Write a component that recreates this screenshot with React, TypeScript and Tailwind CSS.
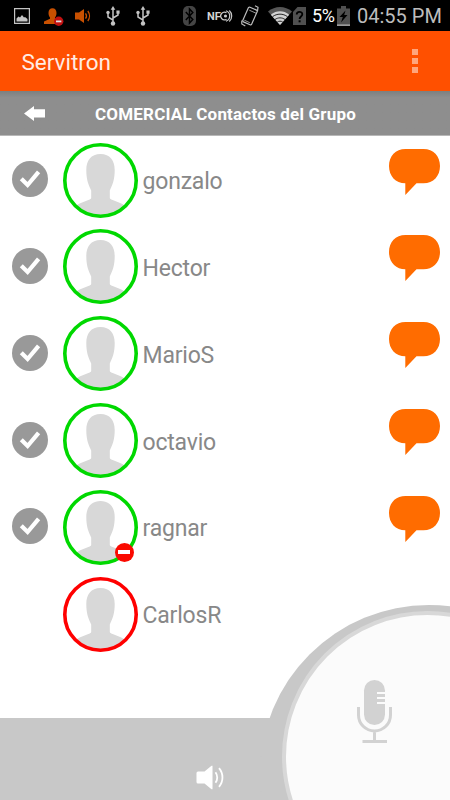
import { clsx } from "clsx";

interface Contact {
  name: string;
  online: boolean;
  busy?: boolean;
}

const contacts: Contact[] = [
  { name: "gonzalo", online: true },
  { name: "Hector", online: true },
  { name: "MarioS", online: true },
  { name: "octavio", online: true },
  { name: "ragnar", online: true, busy: true },
  { name: "CarlosR", online: false },
];

function UsbIcon({ className }: { className?: string }) {
  return (
    <svg className={clsx("h-5 w-[14px] shrink-0", className)} viewBox="0 0 14 20" fill="none" stroke="#c4c4c4" strokeWidth="1.5">
      <path d="M7 3v13M7 14.2 2 11V6.500M7 12l5-3V5.500" />
      <path d="m7 0 2.300 3.800H4.700z" fill="#c4c4c4" stroke="none" />
      <circle cx="7" cy="17.500" r="2.200" fill="#c4c4c4" stroke="none" />
      <circle cx="2" cy="6.500" r="1.700" fill="#c4c4c4" stroke="none" />
      <path d="M10.400 4.500h3.200v3.200h-3.200z" fill="#c4c4c4" stroke="none" />
    </svg>
  );
}

function StatusBar() {
  return (
    <div className="flex h-[31px] shrink-0 items-center bg-black">
      {/* Notifications */}
      <svg className="ml-[14px] h-4 w-4 shrink-0" viewBox="0 0 16 16">
        <path d="M.6.6h14.800v14.800H.6z" fill="none" stroke="#c4c4c4" strokeWidth="1.200" />
        <path d="M2.500 13.500v-3l2-2 1.500 1 2-2.500 2 2.500 1-.5 2.500 2v2.500z" fill="#c4c4c4" />
      </svg>
      <svg className="mt-[2px] ml-[14px] h-[18px] w-[20px] shrink-0" viewBox="0 0 20 18">
        <path d="M4.500 5c0-3 1.500-4.800 4-4.800s4 1.800 4 4.800c0 2.200-.8 3.500-1.500 4.500v1.300l5 2V16H0v-2.500l6-2.700V9.500C5.300 8.500 4.500 7.200 4.500 5z" fill="#c85000" />
        <circle cx="14.700" cy="13.300" r="4.700" fill="#c01010" />
        <path d="M12 12.500h5.400v1.800H12z" fill="#ddd" />
      </svg>
      <svg className="ml-[11px] h-[14px] w-4 shrink-0" viewBox="0 0 16 14">
        <path d="M0 3.500h4L9 0v14l-5-3.500H0z" fill="#c85000" />
        <path d="M10.500 4.300c1.200 1.600 1.200 3.800 0 5.400M12.800 2c2.200 2.900 2.200 7.100 0 10" fill="none" stroke="#c85000" strokeWidth="1.300" />
      </svg>
      <UsbIcon className="ml-[15px]" />
      <UsbIcon className="ml-[16px]" />

      {/* System */}
      <svg className="ml-[33px] h-5 w-[13px] shrink-0" viewBox="0 0 13 20">
        <rect width="13" height="20" rx="5" fill="#454545" />
        <path d="m2.800 6 7 7.500L6.500 17V3l3.300 3.500-7 7.500" fill="none" stroke="#000" strokeWidth="1.500" />
      </svg>
      <svg className="ml-[10px] h-[12px] w-[27px] shrink-0" viewBox="0 0 27 12">
        <text x="1" y="10" fontFamily="Roboto, sans-serif" fontSize="11" fontWeight="700" fill="#d4d4d4">NF</text>
        <path d="M20.500 2.800a3.800 3.800 0 1 0 0 6.400M20 .800a5.500 5.500 0 0 1 0 10.400M23.300.5a7.500 7.500 0 0 1 0 11" fill="none" stroke="#c8c8c8" strokeWidth="1.200" />
        <circle cx="19.500" cy="6" r="1.600" fill="#c8c8c8" />
      </svg>
      <svg className="ml-[8px] h-[22px] w-[18px] shrink-0" viewBox="0 0 18 22" fill="none" stroke="#bdbdbd" strokeWidth="1.200">
        <rect x="4.200" y="3" width="9.600" height="16" rx="1.200" transform="rotate(24 9 11)" />
        <path d="m8.300 5.200 7 3.100M3.300 15.200l5.500 2.500" strokeWidth=".8" />
        <path d="M14 .800l3 1.500-.5 4M.8 15.500v3.500l3.500 2" />
      </svg>
      <svg className="ml-[9px] h-[18px] w-[24px] shrink-0" viewBox="0 0 24 18">
        <path d="M0 4.500C7-1.500 17-1.500 24 4.500L12 18z" fill="#565656" />
        <path d="M2.800 7.700c5.500-4.500 12.900-4.500 18.400 0L12 18z" fill="#d2d2d2" />
        <path d="M4.500 9.700c4.500-3.400 10.500-3.400 15 0M7 12.500c3-2.200 7-2.200 10 0M9.300 15c1.600-1.100 3.800-1.100 5.400 0" fill="none" stroke="#111" strokeWidth=".9" />
      </svg>
      <svg className="ml-[1px] h-[18px] w-[13px] shrink-0" viewBox="0 0 13 18">
        <path d="M4.500 0H13v18H0V5z" fill="#505050" />
        <path d="M3.700 7.500c0-3.500 5.600-3.500 5.600-.3 0 2.300-2.700 2.300-2.700 4.800" fill="none" stroke="#000" strokeWidth="1.800" />
        <path d="M5.600 13.300h2v2h-2z" />
      </svg>
      <span className="ml-[6px] w-[24px] pt-px font-['Roboto'] text-[18px] leading-none tracking-[-0.400px] whitespace-nowrap text-white">5%</span>
      <svg className="ml-[1px] h-5 w-[13px] shrink-0" viewBox="0 0 13 20">
        <path d="M4 0h5v2.500h4V20H0V2.500h4z" fill="#505050" />
        <path d="M0 18.300h13V20H0z" fill="#999" />
        <path d="M8.500 4.500 2.500 11h3.300L4 16.500 10.500 9H7.200z" />
      </svg>
      <span className="ml-[7px] pt-px font-['Roboto'] text-[20px] leading-none whitespace-nowrap text-[#bdbdbd]">04:55 PM</span>
    </div>
  );
}

function CheckIcon() {
  return (
    <svg className="h-9 w-9" viewBox="0 0 36 36">
      <circle cx="18" cy="18" r="18" fill="#999" />
      <path d="m9.300 17.700 6.300 6.300 11-13.200" fill="none" stroke="#fff" strokeWidth="4.200" />
    </svg>
  );
}

function Avatar({ online, busy }: { online: boolean; busy?: boolean }) {
  return (
    <div className="relative h-[75px] w-[75px] shrink-0">
      <svg className="h-full w-full" viewBox="0 0 75 75">
        <path
          d="M37.500 11C28 11 23.300 17.500 23.300 27c0 9 1.700 14 4.900 20.500v7c0 1-.5 1.500-1.500 2-4.500 2-8.200 3-12.700 5.500C19.500 69 28 73 37.500 73S55.500 69 61 62c-4.500-2.500-8.200-3.500-12.700-5.500-1-.5-1.500-1-1.500-2v-7C50 41 51.700 36 51.700 27 51.700 17.500 47 11 37.500 11z"
          fill="#d8d8d8"
        />
        <circle cx="37.500" cy="37.500" r="35.700" fill="none" strokeWidth="3.600" stroke={online ? "#00d800" : "#ff0000"} />
      </svg>
      {busy && (
        <span className="absolute top-[53px] left-[52px] flex h-[19px] w-[19px] items-center justify-center rounded-full bg-[#fa0a00]">
          <span className="h-[4px] w-[12px] bg-white" />
        </span>
      )}
    </div>
  );
}

function ContactRow({ name, online, busy }: Contact) {
  return (
    <li className="flex h-[86.800px] items-center">
      <div className="ml-3 w-[50.500px] pb-[2px]">{online && <CheckIcon />}</div>
      <Avatar online={online} busy={busy} />
      <span className="ml-[5px] flex-1 pt-[3px] font-['Roboto'] text-[23px] leading-none tracking-[-0.200px] text-[#888]">{name}</span>
      {online && (
        <svg className="mr-[10.500px] mb-[17px] h-[46px] w-[51px]" viewBox="0 0 51 46">
          <path d="M16.500 0h18C44.500 0 51 7 51 17s-6.500 17.300-16.500 17.300H27.500L16.300 46V34.300C6.500 34.300 0 27 0 17S6.500 0 16.500 0z" fill="#ff6c00" />
        </svg>
      )}
    </li>
  );
}

export default function App() {
  return (
    <div className="relative flex h-[800px] w-[450px] flex-col overflow-hidden bg-white font-['Roboto']">
      <StatusBar />

      <header className="flex h-[60px] shrink-0 items-center justify-between bg-[#ff5000] pr-[32px] pl-[21.500px]">
        <h1 className="pt-[3px] text-[22.500px] leading-none text-[#ffece4]">Servitron</h1>
        <div className="flex flex-col gap-[3px]">
          <span className="h-[6px] w-[6px] bg-[#ffa57c]" />
          <span className="h-[6px] w-[6px] bg-[#ffa57c]" />
          <span className="h-[6px] w-[6px] bg-[#ffa57c]" />
        </div>
      </header>

      <div className="flex h-[45px] shrink-0 items-center border-b border-[#b8b8b8] bg-linear-to-b from-[#7c8080] via-[#8e8e8e] via-15% to-[#8e8e8e]">
        <svg className="ml-6 h-[15px] w-[21px]" viewBox="0 0 21 15">
          <path d="M0 7.500 10 0v3.300h11v8.200H10V15z" fill="#fff" />
        </svg>
        <h2 className="ml-[50px] pt-[2px] text-[17px] leading-none font-bold tracking-[0.200px] whitespace-nowrap text-white">COMERCIAL Contactos del Grupo</h2>
      </div>

      <ul className="flex-1 pt-[0.800px]">
        {contacts.map((contact) => (
          <ContactRow key={contact.name} {...contact} />
        ))}
      </ul>

      {/* Push to talk */}
      <div className="absolute top-[605px] left-[260px] h-[338px] w-[338px] rounded-full bg-[#c8c8c8]" />
      <footer className="flex h-[82px] shrink-0 items-end bg-[#c8c8c8]">
        <svg className="mb-[10px] ml-[195.500px] h-[25px] w-[28px]" viewBox="0 0 28 25" fill="none" stroke="#fff">
          <path d="M2 6.500h6.500L15.500.8h1v23.400h-1L8.500 18.500H2q-1.500 0-1.500-1.500V8q0-1.500 1.500-1.500z" fill="#fff" stroke="none" />
          <path d="M19.500 7.200c2.300 3 2.300 7.600 0 10.600M23 3.200c4.600 5.400 4.600 13.200 0 18.600" strokeWidth="1.800" />
        </svg>
      </footer>
      <div className="absolute top-[611px] left-[282px] h-[291px] w-[291px] rounded-full border-[4px] border-[#d8d8d8] bg-[#fbfbfb]">
        <svg className="mt-[65px] ml-[71px] h-[63px] w-[35px]" viewBox="0 0 35 63">
          <rect x="7" y="0" width="21" height="45" rx="10.500" fill="#d2d2d2" />
          <path d="M20 13h9M20 18h9M20 23h9" stroke="#fbfbfb" strokeWidth="2.200" />
          <path d="M1.500 27v8a16 16 0 0 0 32 0v-8M17.500 51v10M5.500 61.500h24.500" fill="none" stroke="#d2d2d2" strokeWidth="3" />
        </svg>
      </div>
    </div>
  );
}
